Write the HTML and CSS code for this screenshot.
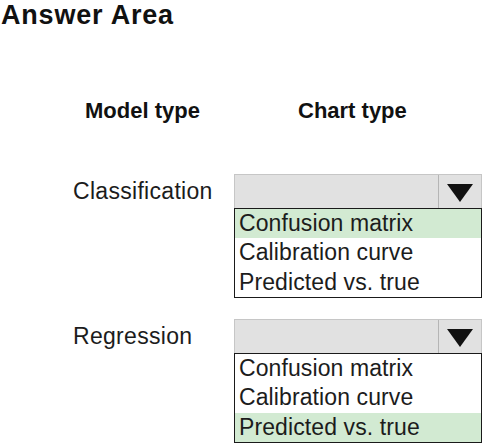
FILE: index.html
```html
<!DOCTYPE html>
<html lang="en">
<head>
<meta charset="utf-8">
<title>Answer Area</title>
<link rel="stylesheet" href="styles.css">
</head>
<body>
<div class="page">
  <h1 class="title">Answer Area</h1>
  <div class="table">
    <div class="head-row">
      <div class="h-model">Model type</div>
      <div class="h-chart">Chart type</div>
    </div>
    <div class="row">
      <div class="label">Classification</div>
      <div class="dropdown">
        <div class="dd-head">
          <div class="dd-value"></div>
          <div class="dd-arrow"><svg width="26" height="18" viewBox="0 0 26 18"><polygon points="0,0 26,0 13,18" fill="#111"/></svg></div>
        </div>
        <ul class="dd-list">
          <li class="dd-item selected">Confusion matrix</li>
          <li class="dd-item">Calibration curve</li>
          <li class="dd-item">Predicted vs. true</li>
        </ul>
      </div>
    </div>
    <div class="row row-second">
      <div class="label">Regression</div>
      <div class="dropdown">
        <div class="dd-head">
          <div class="dd-value"></div>
          <div class="dd-arrow"><svg width="26" height="18" viewBox="0 0 26 18"><polygon points="0,0 26,0 13,18" fill="#111"/></svg></div>
        </div>
        <ul class="dd-list">
          <li class="dd-item">Confusion matrix</li>
          <li class="dd-item">Calibration curve</li>
          <li class="dd-item selected">Predicted vs. true</li>
        </ul>
      </div>
    </div>
  </div>
</div>
</body>
</html>
```
FILE: styles.css
```css
html, body {
  margin: 0;
  padding: 0;
  background: #ffffff;
}
body {
  font-family: "Liberation Sans", Arial, sans-serif;
  color: #1c1c1c;
}
.page {
  width: 483px;
  height: 446px;
  overflow: hidden;
}
.title {
  margin: 0;
  padding-left: 1px;
  font-size: 27px;
  line-height: 31px;
  font-weight: bold;
  letter-spacing: 0.8px;
  color: #111;
}
.table {
  padding-left: 73px;
}
.head-row {
  display: flex;
  margin-top: 69px;
  font-size: 22px;
  line-height: 22px;
  font-weight: bold;
  color: #111;
}
.h-model {
  width: 161px;
  padding-left: 12px;
  box-sizing: border-box;
}
.h-chart {
  padding-left: 64px;
}
.row {
  display: flex;
  align-items: flex-start;
  margin-top: 52px;
}
.row-second {
  margin-top: 21px;
}
.label {
  width: 161px;
  height: 34px;
  display: flex;
  align-items: center;
  font-size: 23px;
  letter-spacing: 0.3px;
}
.dropdown {
  width: 248px;
}
.dd-head {
  display: flex;
  height: 34px;
  box-sizing: border-box;
  background: #e1e1e1;
  border: 1px solid #c6c6c6;
  border-bottom: none;
}
.dd-value {
  flex: 1;
}
.dd-arrow {
  width: 43px;
  border-left: 1px solid #b5b5b5;
  display: flex;
  align-items: center;
  justify-content: center;
  padding-top: 2px;
  box-sizing: border-box;
}
.dd-arrow svg {
  display: block;
}
.dd-list {
  list-style: none;
  margin: 0;
  padding: 0;
  height: 90px;
  box-sizing: border-box;
  border: 1px solid #1a1a1a;
  display: flex;
  flex-direction: column;
}
.dd-item {
  flex: 1;
  display: flex;
  align-items: center;
  padding-left: 4px;
  font-size: 23px;
  letter-spacing: 0.1px;
  background: #ffffff;
}
.dd-item.selected {
  background: #d2ead2;
}
```
